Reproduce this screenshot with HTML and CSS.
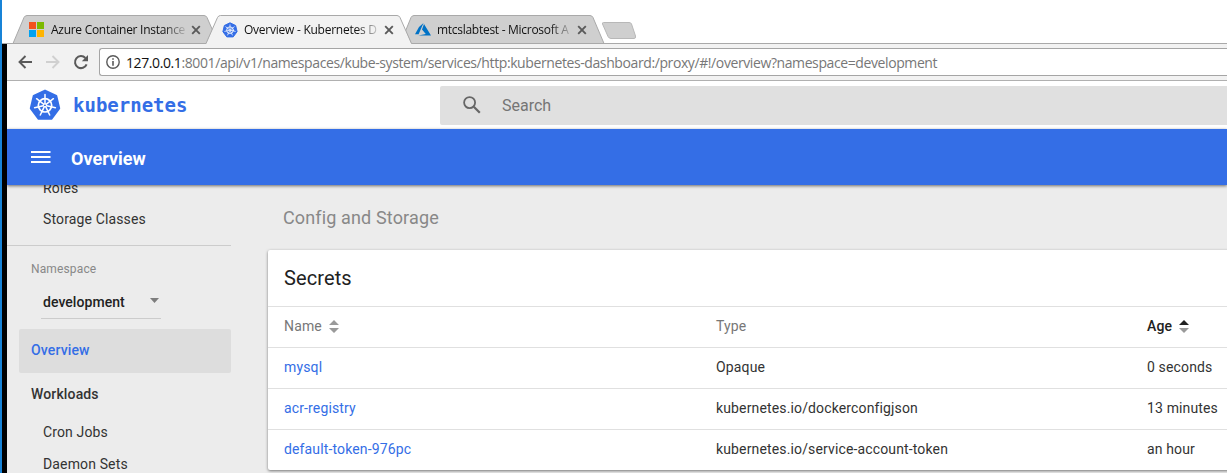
FILE: index.html
```
<!DOCTYPE html>
<html lang="en">
<head>
<meta charset="utf-8">
<title>Overview - Kubernetes Dashboard</title>
<link rel="stylesheet" href="styles.css">
</head>
<body>
<svg class="defs" width="0" height="0">
  <symbol id="helm" viewBox="0 0 32 32">
    <path fill="#346ee6" stroke="#346ee6" stroke-width="2" stroke-linejoin="round" d="M16 1.6 27.3 7 30.2 19.3 22.4 29.8H9.6L1.8 19.3 4.7 7Z"/>
    <g fill="none" stroke="#fff" stroke-linecap="round">
      <circle cx="16" cy="16.3" r="6.7" stroke-width="1.7"/>
      <path stroke-width="1.5" d="M16 14.5V5.6M17.4 15.2l7-5.5M17.8 16.7l8.6 2M16.8 17.9l3.9 8.1M15.2 17.9l-3.9 8.1M14.2 16.7l-8.6 2M14.6 15.2l-7-5.5"/>
      <circle cx="16" cy="16.3" r="1.5" stroke-width="1"/>
    </g>
  </symbol>
  <symbol id="close" viewBox="0 0 10 10"><path d="M1.2 1.2 8.8 8.8M8.8 1.2 1.2 8.8" stroke="#5a5a5a" stroke-width="1.9"/></symbol>
</svg>
<div class="screen">
  <header class="tabs">
    <svg class="tab-shapes" width="640" height="44" viewBox="0 0 640 44">
      <path d="M13 43.5 24 17.5Q25 15.5 27 15.5H204Q206 15.5 207 17.5L212.5 30 207 43.5Z" fill="#cfcfcf" stroke="#a9a9a9"/>
      <path d="M411 43.5 405.500 31 411 17.500Q412 15.5 414 15.5H590Q592 15.5 593 17.5L604 43.5Z" fill="#cfcfcf" stroke="#a9a9a9"/>
      <path d="M206 44 217.500 17.500Q218.500 15.500 220.500 15.500H397Q399 15.500 400 17.500L411.500 44Z" fill="#f2f2f2"/>
      <path d="M206 43.500 217.500 17.500Q218.500 15.500 220.500 15.500H397Q399 15.500 400 17.500L411.500 43.500" fill="none" stroke="#a9a9a9"/>
      <path d="M603.500 22.500H629Q631 22.500 631.500 24L635.500 36Q636 38.500 634 38.500H611Q609 38.500 608 36.500L602.500 24Q602 22.500 603.500 22.500Z" fill="#cfcfcf" stroke="#b8b8b8"/>
    </svg>
    <div class="tab tab-one">
      <svg width="15" height="15" viewBox="0 0 15 15"><path fill="#f4511e" d="M0 0h7v7H0z"/><path fill="#7cb900" d="M8 0h7v7H8z"/><path fill="#00a1f1" d="M0 8h7v7H0z"/><path fill="#ffb400" d="M8 8h7v7H8z"/></svg>
      <span class="tab-title">Azure Container Instance</span>
      <svg class="close" width="10" height="10"><use href="#close"/></svg>
    </div>
    <div class="tab tab-two">
      <svg width="16" height="16"><use href="#helm"/></svg>
      <span class="tab-title">Overview - Kubernetes D</span>
      <svg class="close" width="10" height="10"><use href="#close"/></svg>
    </div>
    <div class="tab tab-three">
      <svg width="16" height="13" viewBox="0 0 16 13"><path fill="#0072c6" d="M8.500 0 4 4 0 11.200H3.600ZM9 1 7 6.500 10.800 11 3.500 12.500H16Z"/></svg>
      <span class="tab-title">mtcslabtest - Microsoft A</span>
      <svg class="close" width="10" height="10"><use href="#close"/></svg>
    </div>
  </header>
  <div class="window">
    <div class="toolbar">
      <svg width="14" height="14" viewBox="0 0 14 14" fill="none" stroke="#5a5a5a" stroke-width="1.9"><path d="M14 7H1.500M7.500 1 1.500 7l6 6"/></svg>
      <svg width="14" height="14" viewBox="0 0 14 14" fill="none" stroke="#d0d0d0" stroke-width="1.900"><path d="M0 7H12.500M6.500 1l6 6-6 6"/></svg>
      <svg class="reload" width="16" height="16" viewBox="0 0 16 16"><path fill="none" stroke="#5a5a5a" stroke-width="2" d="M13.600 10.300A6 6 0 1 1 12.400 4"/><path fill="#5a5a5a" d="M15 1V7.200H8.800Z"/></svg>
      <div class="address">
        <svg width="14" height="14" viewBox="0 0 14 14"><circle cx="7" cy="7" r="6.200" fill="none" stroke="#5a5a5a" stroke-width="1.400"/><path fill="#5a5a5a" d="M6.200 3.200h1.600v1.600H6.200zM6.200 6h1.600v4.800H6.200z"/></svg>
        <span class="url"><b>127.0.0.1</b>:8001/api/v1/namespaces/kube-system/services/http:kubernetes-dashboard:/proxy/#!/overview?namespace=development</span>
      </div>
    </div>
    <div class="brandbar">
      <svg class="logo" width="32" height="32"><use href="#helm"/></svg>
      <span class="wordmark">kubernetes</span>
      <div class="search">
        <svg width="18" height="18" viewBox="0 0 18 18" fill="none" stroke="#666"><circle cx="6.600" cy="6.600" r="5.500" stroke-width="1.800"/><path stroke-width="2.200" d="m10.800 10.800 6 6"/></svg>
        <span>Search</span>
      </div>
    </div>
    <div class="actionbar">
      <svg width="20" height="12" viewBox="0 0 20 12"><path fill="#fff" d="M0 0h19.500v2H0zM0 5h19.500v2H0zM0 10h19.500v2H0z"/></svg>
      <h1>Overview</h1>
    </div>
    <div class="body">
      <nav class="sidebar">
        <div class="sub first">Roles</div>
        <div class="sub">Storage Classes</div>
        <div class="namespace">
          <div class="label">Namespace</div>
          <div class="select"><span>development</span><svg width="9" height="5" viewBox="0 0 9 5"><path fill="#7d7d7d" d="M0 0h9L4.500 5z"/></svg></div>
        </div>
        <div class="item active">Overview</div>
        <div class="item">Workloads</div>
        <div class="sub">Cron Jobs</div>
        <div class="sub">Daemon Sets</div>
      </nav>
      <main class="content">
        <h2>Config and Storage</h2>
        <section class="card">
          <h3>Secrets</h3>
          <div class="row head">
            <span>Name <svg class="sort" width="10" height="13" viewBox="0 0 10 13"><path fill="#9a9a9a" d="M0 5 5 0l5 5zM0 8h10l-5 5z"/></svg></span>
            <span>Type</span>
            <span class="sorted">Age <svg class="sort" width="10" height="13" viewBox="0 0 10 13"><path fill="#212121" d="M0 5 5 0l5 5z"/><path fill="#9a9a9a" d="M0 8h10l-5 5z"/></svg></span>
          </div>
          <div class="row"><a>mysql</a><span>Opaque</span><span>0 seconds</span></div>
          <div class="row"><a>acr-registry</a><span>kubernetes.io/dockerconfigjson</span><span>13 minutes</span></div>
          <div class="row"><a>default-token-976pc</a><span>kubernetes.io/service-account-token</span><span>an hour</span></div>
        </section>
      </main>
    </div>
  </div>
</div>
</body>
</html>
```
FILE: styles.css
```
* { box-sizing: border-box; }
body { margin: 0; background: #fff; font-family: Roboto, sans-serif; font-size: 14px; color: #333; }
svg { display: block; flex: none; }
.defs { position: absolute; }
.screen { width: 1227px; height: 473px; overflow: hidden; border-left: 2px solid #1883d7; }

.tabs { height: 44px; position: relative; display: flex; padding-top: 15px; border-bottom: 1px solid #a9a9a9; font: 12px "Open Sans", sans-serif; letter-spacing: -.28px; color: #111; }
.tab-shapes { position: absolute; left: -2px; top: 0; }
.tab { position: relative; display: flex; align-items: center; height: 29px; }
.tab-one { width: 192px; margin-left: 27px; }
.tab-two { width: 193px; margin-left: 1px; letter-spacing: -.25px; }
.tab-three { width: 180px; }
.tab-title { margin-left: 7px; width: 134px; white-space: nowrap; -webkit-mask-image: linear-gradient(90deg, #000 112px, transparent 138px); mask-image: linear-gradient(90deg, #000 112px, transparent 138px); }
.tab-two .tab-title, .tab-three .tab-title { margin-left: 6px; }
.tab .close { margin-left: 6px; }

.window { border-left: 5px solid #000; height: 429px; display: flex; flex-direction: column; }
.toolbar { height: 37px; flex: none; display: flex; align-items: center; gap: 14px; padding-left: 11px; background: #f2f2f2; border-bottom: 1px solid #b0b0b0; }
.reload { margin-left: -1px; }
.address { flex: 1; height: 28px; margin-left: -4px; padding-left: 6px; display: flex; align-items: center; gap: 6px; background: #fff; border: 1px solid #a5a5a5; border-right: 0; border-radius: 3px 0 0 3px; }
.url { font: 14px "Open Sans", sans-serif; letter-spacing: -.4px; color: #777; white-space: nowrap; }
.url b { font-weight: 400; color: #111; }

.brandbar { height: 48px; flex: none; display: flex; align-items: center; padding-left: 22px; }
.wordmark { margin-left: 12px; width: 367px; font: bold 19px "DejaVu Sans Mono", monospace; color: #346ee6; }
.search { flex: 1; height: 39px; display: flex; align-items: center; gap: 21px; padding-left: 23px; background: #e0e0e0; border-radius: 2px 0 0 2px; font-size: 16px; color: #757575; }

.actionbar { height: 56px; flex: none; position: relative; z-index: 1; display: flex; align-items: center; gap: 20px; padding-left: 24px; background: #346ee6; box-shadow: 0 1px 3px rgba(0,0,0,.55); }
.actionbar h1 { margin: 3px 0 0; font-size: 18px; font-weight: 700; color: #fff; }

.body { flex: 1; min-height: 0; display: flex; background: #ececec; }
.sidebar { width: 224px; flex: none; letter-spacing: .14px; }
.sub { height: 32px; line-height: 31px; padding-left: 36px; }
.sub.first { margin-top: -13px; line-height: 32px; }
.namespace { margin-top: 9px; height: 84px; border-top: 1px solid #ccc; padding: 15px 0 0 24px; }
.label { font-size: 12px; line-height: 16px; color: #888; }
.select { margin: 8px 0 0 10px; width: 120px; height: 34px; display: flex; align-items: center; justify-content: space-between; padding: 0 2px; border-bottom: 1px solid #ccc; font-weight: 500; letter-spacing: .05px; color: #222; }
.select svg { margin-top: -3px; }
.item { height: 44px; line-height: 42px; margin-left: 12px; padding-left: 12px; font-weight: 500; }
.item.active { background: #ddd; border-radius: 2px; color: #346ee6; }

.content { flex: 1; padding-left: 37px; }
h2 { height: 65px; margin: 0; padding-left: 15px; line-height: 66px; font-size: 18px; font-weight: 400; letter-spacing: .14px; color: #888; }
.card { width: 1000px; background: #fff; border-radius: 2px; box-shadow: 0 1px 3px rgba(0,0,0,.5); }
h3 { height: 56px; margin: 0; padding-left: 16px; line-height: 56px; font-size: 20px; font-weight: 400; letter-spacing: .1px; color: #212121; }
.row { height: 41px; border-top: 1px solid #e0e0e0; padding: 0 0 2px 16px; display: grid; grid-template-columns: 432px 431px 1fr; align-items: center; letter-spacing: .14px; color: #333; }
.row a { color: #346ee6; }
.row > span { display: flex; align-items: center; gap: 7px; }
.sort { margin-top: 1px; }
.head { color: #777; }
.head .sorted { font-weight: 500; color: #212121; }
```
